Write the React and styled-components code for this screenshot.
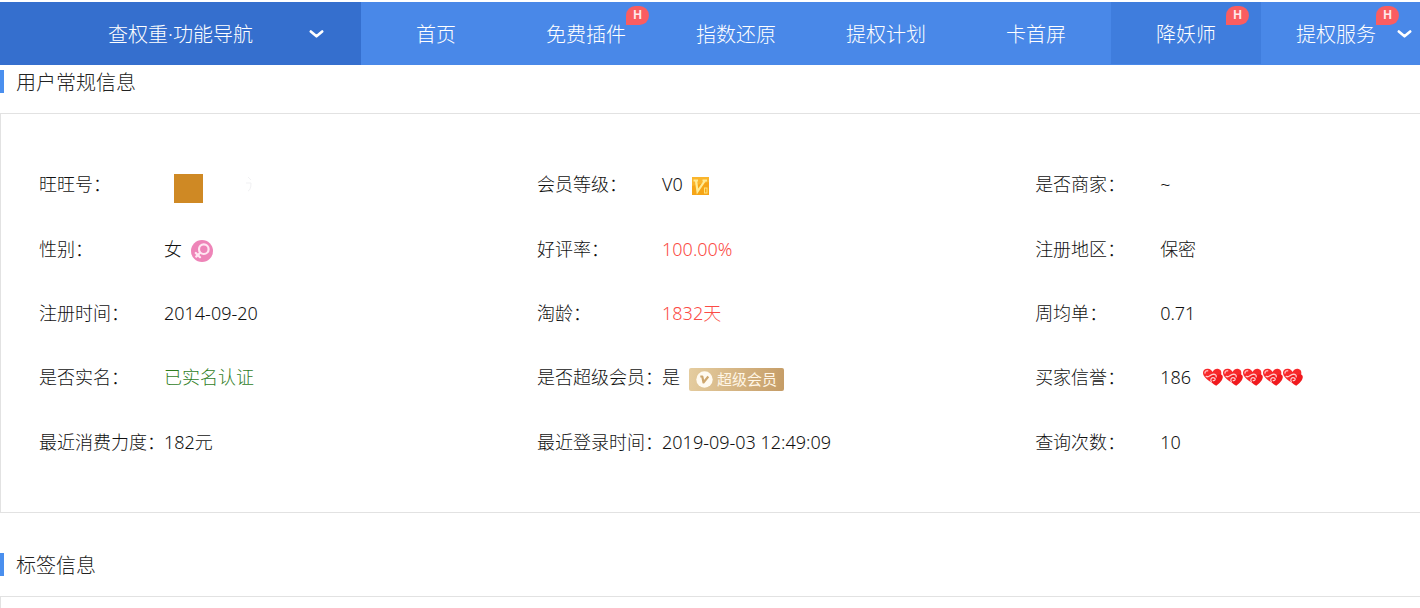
import React from "react";
import styled, { createGlobalStyle } from "styled-components";

const GlobalStyle = createGlobalStyle`
  *, *::before, *::after { box-sizing: border-box; }
  body {
    margin: 0;
    background: #fff;
    color: #111;
    font-family: "Noto Sans", "Noto Sans CJK SC", sans-serif;
    font-weight: 300;
    font-size: 18px;
    line-height: 24px;
  }
`;

const Page = styled.div`
  display: flex;
  flex-direction: column;
  min-height: 100vh;
  padding-top: 2px;
  overflow-x: hidden;
`;

const TopBar = styled.header`
  display: flex;
  height: 63px;
  background: #4988e8;
  color: #fff;
  font-size: 20px;
  white-space: nowrap;
  overflow: hidden;
`;

const MenuButton = styled.button`
  flex: 0 0 361px;
  display: flex;
  align-items: center;
  justify-content: space-between;
  padding: 2px 37px 0 108px;
  border: 0;
  background: #356fce;
  color: inherit;
  font: inherit;
  cursor: pointer;
`;

const NavList = styled.nav`
  flex: 1;
  display: flex;
`;

const NavLink = styled.a`
  position: relative;
  flex: 0 0 150px;
  height: 62px;
  display: flex;
  align-items: center;
  justify-content: ${(p) => (p.$menu ? "flex-start" : "center")};
  gap: 21px;
  padding-top: 3px;
  padding-left: ${(p) => (p.$menu ? "35px" : "0")};
  background: ${(p) => (p.$active ? "#3f7ddd" : "transparent")};
  color: inherit;
  text-decoration: none;
`;

const HotBadge = styled.span`
  position: absolute;
  top: 4px;
  left: 115px;
  width: 23px;
  height: 19px;
  border-radius: 10px 10px 10px 0;
  background: #fa5d60;
  color: #ffe9e9;
  font: 700 12px/18px "Liberation Sans", sans-serif;
  text-align: center;
`;

const SectionTitle = styled.h2`
  margin: ${(p) => (p.$first ? "5px" : "40px")} 0 20px;
  padding: 2px 0 0 12px;
  border-left: 4px solid #4a8fee;
  color: #222;
  font-size: 20px;
  font-weight: 300;
  line-height: 21px;
`;

const Panel = styled.section`
  padding: 38px 0 38px 38px;
  border: solid #e2e2e2;
  border-width: 1px 0 1px 1px;
`;

const OpenPanel = styled(Panel)`
  flex: 1;
  padding: 0;
  border-bottom: 0;
`;

const InfoGrid = styled.dl`
  display: grid;
  grid-template-columns: 22fr 22fr 17fr;
  grid-auto-rows: 1fr;
  min-height: 322px;
  margin: 0;
`;

const InfoItem = styled.div`
  display: flex;
  align-items: center;
  white-space: nowrap;
`;

const Label = styled.dt`
  flex: 0 0 125px;
  min-width: 0;
`;

const tones = { normal: "#111", red: "#fb4b45", green: "#2f7d1e" };

const Value = styled.dd`
  display: flex;
  align-items: center;
  gap: 9px;
  margin: 0;
  color: ${(p) => tones[p.$tone || "normal"]};
`;

const IconSlot = styled.span`
  display: flex;
  padding-top: 4px;
`;

const Mask = styled.span`
  display: flex;
  gap: 42px;
  padding: 9px 0 0 10px;
`;

const MaskBlock = styled.span`
  width: 29px;
  height: 29px;
  background: #cf8924;
`;

const SuperBadge = styled.span`
  display: flex;
  align-items: center;
  gap: 4px;
  width: 95px;
  height: 23px;
  margin-top: 4px;
  padding-left: 7px;
  border-radius: 2px;
  background: linear-gradient(100deg, #e5cda0, #c59c66);
  color: #fff6e6;
  font-size: 15px;
  font-weight: 400;
  line-height: 23px;
`;

const Hearts = styled.span`
  display: flex;
  padding-left: 3px;
`;

const Chevron = () => (
  <svg width="15" height="9" viewBox="0 0 15 9" fill="none" stroke="#fff" strokeWidth="2.6" aria-hidden="true">
    <path d="M1.8 1.5 L7.5 6.3 L13.2 1.5" strokeLinecap="round" strokeLinejoin="round" />
  </svg>
);

const FemaleIcon = () => (
  <svg width="22" height="22" viewBox="0 0 22 22" fill="none" aria-hidden="true">
    <circle cx="11" cy="11" r="11" fill="#ee84b8" />
    <g stroke="#ffe6f2" strokeWidth="2.2" strokeLinecap="round">
      <circle cx="12.8" cy="9.2" r="4.8" />
      <path d="M9.2 12.7 L5.2 16.6 M4.8 13 L9 17.2" />
    </g>
  </svg>
);

const LevelIcon = () => (
  <svg width="17" height="18" viewBox="0 0 17 18" fill="none" aria-hidden="true">
    <rect width="17" height="18" fill="#f6a516" />
    <path d="M0 0 H17 V5 L0 9 Z" fill="#fab52c" />
    <path d="M1.5 3.5 H6 M4 3.5 L5.5 14.5 L13 3.5 M10.5 3.5 H15" stroke="#ffeb94" strokeWidth="2.2" />
    <rect x="12.5" y="11" width="2.5" height="5" stroke="#ffe47b" />
  </svg>
);

const SuperIcon = () => (
  <svg width="17" height="17" viewBox="0 0 17 17" fill="none" aria-hidden="true">
    <circle cx="8.5" cy="8.5" r="8.2" fill="#fffaf0" />
    <path d="M4.3 5.5 H6.3 L7.5 11.5 L12.3 5.5" stroke="#cda66e" strokeWidth="2.2" strokeLinejoin="round" />
  </svg>
);

const HeartIcon = () => (
  <svg width="20" height="18" viewBox="0 0 20 18" fill="none" aria-hidden="true">
    <path d="M8.5 14.5 C3 11 0 8 0 4.8 C0 1.8 2.5 .5 5 .8 C7 1 8.6 2.2 9.6 4 C11 1.2 13.4 .3 15.6 1 C18.6 2 19 5 17.6 8 L11 15 Z" fill="#f8292b" />
    <path d="M13.2 17.8 C9 15.4 6.4 12.4 7.2 9.6 C8 7.2 11.2 6.8 13 9 C14.2 6.4 17.6 5 19.4 7.4 C21 10.6 17.4 15 13.2 17.8 Z" fill="#f01a1e" />
    <path d="M2 5 C2 3.4 3.2 2.6 4.6 2.8" stroke="#ffb3b3" strokeWidth="1.5" strokeLinecap="round" />
    <path d="M3.2 8.4 C5.6 10 6.8 7 9.6 6.4 C12 5.9 13.6 7 13.2 8.8 M8.4 14 C6.8 11.4 8.6 9 11 9.8 C13 10.6 12.2 13 10.2 12.6" stroke="#ffc9c9" strokeWidth="1.3" strokeLinecap="round" />
  </svg>
);

const navItems = [
  { text: "首页" },
  { text: "免费插件", hot: true },
  { text: "指数还原" },
  { text: "提权计划" },
  { text: "卡首屏" },
  { text: "降妖师", hot: true, active: true },
  { text: "提权服务", hot: true, menu: true },
];

const facts = [
  {
    label: "旺旺号",
    value: (
      <Mask>
        <MaskBlock />
        <svg width="8" height="20" viewBox="0 0 8 20" fill="none" stroke="#f1f1f3" aria-hidden="true">
          <path d="M3 3 L6 6 M1 9 H6 Q6 16 3 17" />
        </svg>
      </Mask>
    ),
  },
  { label: "会员等级", value: <>V0<IconSlot><LevelIcon /></IconSlot></> },
  { label: "是否商家", value: "~" },
  { label: "性别", value: <>女<IconSlot><FemaleIcon /></IconSlot></> },
  { label: "好评率", value: "100.00%", tone: "red" },
  { label: "注册地区", value: "保密" },
  { label: "注册时间", value: "2014-09-20" },
  { label: "淘龄", value: "1832天", tone: "red" },
  { label: "周均单", value: "0.71" },
  { label: "是否实名", value: "已实名认证", tone: "green" },
  { label: "是否超级会员", value: <>是<SuperBadge><SuperIcon />超级会员</SuperBadge></> },
  {
    label: "买家信誉",
    value: <>186<Hearts>{[0, 1, 2, 3, 4].map((i) => <HeartIcon key={i} />)}</Hearts></>,
  },
  { label: "最近消费力度", value: "182元" },
  { label: "最近登录时间", value: "2019-09-03 12:49:09" },
  { label: "查询次数", value: "10" },
];

export default function App() {
  return (
    <Page lang="zh-CN">
      <GlobalStyle />
      <TopBar>
        <MenuButton type="button">
          查权重·功能导航
          <Chevron />
        </MenuButton>
        <NavList>
          {navItems.map((item) => (
            <NavLink key={item.text} href="#" $active={item.active} $menu={item.menu}>
              {item.text}
              {item.menu && <Chevron />}
              {item.hot && <HotBadge>H</HotBadge>}
            </NavLink>
          ))}
        </NavList>
      </TopBar>
      <SectionTitle $first>用户常规信息</SectionTitle>
      <Panel>
        <InfoGrid>
          {facts.map((fact) => (
            <InfoItem key={fact.label}>
              <Label>{fact.label}：</Label>
              <Value $tone={fact.tone}>{fact.value}</Value>
            </InfoItem>
          ))}
        </InfoGrid>
      </Panel>
      <SectionTitle>标签信息</SectionTitle>
      <OpenPanel />
    </Page>
  );
}
